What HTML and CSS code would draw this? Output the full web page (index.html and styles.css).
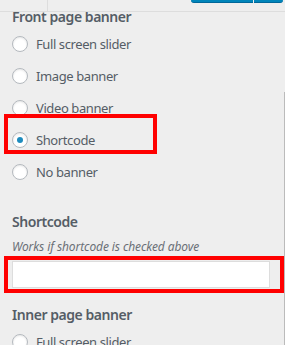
FILE: index.html
```html
<!DOCTYPE html>
<html lang="en">
<head>
<meta charset="utf-8">
<title>Customizer</title>
<link rel="stylesheet" href="styles.css">
</head>
<body>
<div class="page">
  <div class="topbar">
    <div class="back"></div>
    <div class="publish"><span class="publish-main"></span><span class="publish-gear"></span></div>
  </div>
  <div class="panel">
    <div class="section front">
      <div class="heading">Front page banner</div>
      <ul class="radios">
        <li class="radio-row"><span class="radio"></span><span class="label">Full screen slider</span></li>
        <li class="radio-row"><span class="radio"></span><span class="label">Image banner</span></li>
        <li class="radio-row"><span class="radio"></span><span class="label">Video banner</span></li>
        <li class="radio-row"><span class="radio checked"></span><span class="label">Shortcode</span></li>
        <li class="radio-row"><span class="radio"></span><span class="label">No banner</span></li>
      </ul>
    </div>
    <div class="section shortcode">
      <div class="heading">Shortcode</div>
      <div class="desc">Works if shortcode is checked above</div>
      <div class="input"></div>
    </div>
    <div class="section inner">
      <div class="heading">Inner page banner</div>
      <ul class="radios">
        <li class="radio-row"><span class="radio"></span><span class="label">Full screen slider</span></li>
      </ul>
    </div>
  </div>
  <div class="scrollbar"></div>
  <div class="mark mark-radio"></div>
  <div class="mark mark-input"></div>
</div>
</body>
</html>
```

FILE: styles.css
```css
html, body {
  margin: 0;
  padding: 0;
  background: #eeeeee;
}
body {
  font-family: "Noto Sans", "Open Sans", "Liberation Sans", sans-serif;
  color: #555d66;
  overflow: hidden;
}
.page {
  position: relative;
  width: 285px;
  height: 345px;
  overflow: hidden;
}
.topbar {
  position: relative;
  z-index: 1;
  display: flex;
  height: 11px;
  border-bottom: 1px solid #dddddd;
}
.back {
  width: 47px;
  border-right: 1px solid #dddddd;
}
.publish {
  margin-left: auto;
  margin-right: 2px;
  width: 92px;
  height: 3px;
  display: flex;
}
.publish-main {
  flex: 1;
  background: #0085ba;
  border-bottom: 1px solid #006799;
  border-radius: 0 0 0 3px;
}
.publish-gear {
  width: 29px;
  margin-left: 1px;
  background: #0085ba;
  border-bottom: 1px solid #006799;
  border-radius: 0 0 3px 0;
}
.panel {
  padding: 0 12px;
}
.heading {
  font-size: 14px;
  font-weight: 600;
  line-height: 20px;
  letter-spacing: -0.45px;
  color: #555d66;
}
.front .heading {
  margin-top: -5px;
}
.radios {
  list-style: none;
  margin: 1px 0 0;
  padding: 0;
}
.radio-row {
  display: flex;
  align-items: center;
  height: 32px;
}
.radio {
  box-sizing: border-box;
  width: 16px;
  height: 16px;
  border: 1px solid #b4b9be;
  border-radius: 50%;
  background: #ffffff;
  box-shadow: inset 0 1px 2px rgba(0, 0, 0, 0.1);
  display: flex;
  align-items: center;
  justify-content: center;
  flex: none;
}
.radio.checked::before {
  content: "";
  width: 6px;
  height: 6px;
  border-radius: 50%;
  background: #1e8cbe;
}
.label {
  margin-left: 8px;
  font-size: 13px;
  letter-spacing: -0.4px;
  color: #555d66;
}
.shortcode {
  margin-top: 24px;
}
.desc {
  font-size: 12px;
  font-style: italic;
  color: #6b7077;
  line-height: 18px;
  margin-top: 6px;
  letter-spacing: -0.1px;
}
.input {
  box-sizing: border-box;
  height: 27px;
  margin-top: 5px;
  width: 258px;
  background: #ffffff;
  border: 1px solid #dddddd;
}
.inner {
  margin-top: 17px;
}
.scrollbar {
  position: absolute;
  right: 0;
  top: 92px;
  bottom: 0;
  width: 1px;
  background: #bbbbbb;
}
.mark {
  position: absolute;
  box-sizing: border-box;
  border: 4px solid #ff0000;
}
.mark-radio {
  left: 4px;
  top: 114px;
  width: 153px;
  height: 40px;
}
.mark-input {
  left: 4px;
  top: 256px;
  width: 280px;
  height: 37px;
}
```
